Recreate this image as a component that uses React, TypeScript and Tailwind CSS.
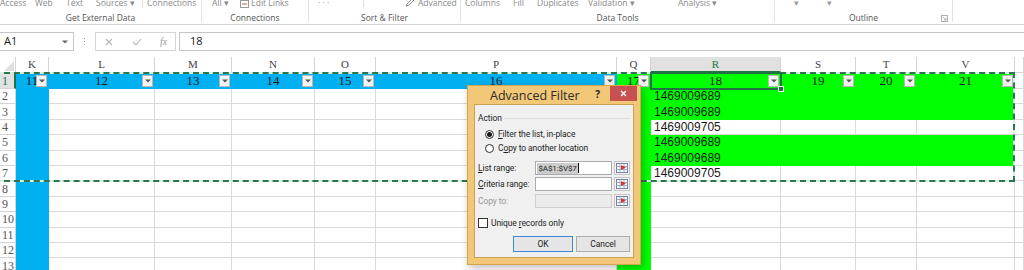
import React from "react";

type Fill = "blue" | "green" | "none";

const columns = ["K", "L", "M", "N", "O", "P", "Q", "R", "S", "T", "V", "W"];
const headerValues = ["11", "12", "13", "14", "15", "16", "17", "18", "19", "20", "21", ""];
const rData: Record<number, string> = {
  2: "1469009689",
  3: "1469009689",
  4: "1469009705",
  5: "1469009689",
  6: "1469009689",
  7: "1469009705",
};

// which colour a cell gets, row numbers are the sheet's (1..13)
function fillFor(row: number, col: number): Fill {
  if (col === 11) return "none";
  if (row === 1) return col <= 5 ? "blue" : "green";
  if (col === 0) return "blue";
  if (col === 6) return "green";
  if (col >= 7 && [2, 3, 5, 6].includes(row)) return "green";
  return "none";
}

const fillClass: Record<Fill, string> = {
  blue: "bg-[#00b0f0] border-[#00b0f0]",
  green: "bg-[#00ff00] border-[#00ff00]",
  none: "bg-white border-[#dadada]",
};

const FilterButton = () => (
  <div className="absolute right-[1px] top-[2px] flex h-[12px] w-[11px] items-center justify-center border border-[#b8b8b8] bg-[#f4f4f4]">
    <svg width="6" height="4" viewBox="0 0 6 4">
      <path d="M0 0.5h6L3 3.5z" fill="#555" />
    </svg>
  </div>
);

const RangeButton = () => (
  <div className="ml-[2px] flex h-[14px] w-[16px] items-center justify-center border border-[#c4c4c4] bg-[#f6f6f6]">
    <svg width="12" height="10" viewBox="0 0 12 10">
      <rect x="0.5" y="0.5" width="11" height="9" fill="#fff" stroke="#6b7fa8" />
      <path d="M0.5 3.5h11M0.5 6.5h11M4 0.5v9M8 0.5v9" stroke="#9aaccc" strokeWidth="1" />
      <path d="M5 2l5 2.5-5 2.5z" fill="#d8322a" />
    </svg>
  </div>
);

const Ribbon = () => (
  <div className="flex h-[25px] overflow-hidden border-b border-[#d5d5d5] bg-white font-['Open_Sans',sans-serif] text-[8.5px] leading-[12px]">
    {/* Get External Data */}
    <div className="flex h-[22px] w-[202px] flex-col border-r border-[#e2e2e2]">
      <div className="-mt-[3px] flex h-[12px] text-[#8a8a8a]">
        <span className="w-[35px]">Access</span>
        <span className="w-[31px]">Web</span>
        <span className="w-[30px]">Text</span>
        <span className="w-[46px]">Sources ▾</span>
        <span className="mr-[4px] h-[10px] border-l border-[#dcdcdc]" />
        <span>Connections</span>
      </div>
      <div className="mt-[3px] text-center text-[#555]">Get External Data</div>
    </div>
    {/* Connections */}
    <div className="flex h-[22px] w-[107px] flex-col border-r border-[#e2e2e2]">
      <div className="-mt-[3px] flex h-[12px] pl-[10px] text-[#8a8a8a]">
        <span className="w-[28px]">All ▾</span>
        <svg className="mr-[2px] mt-[3px]" width="9" height="8" viewBox="0 0 9 8">
          <rect x="0.5" y="0.5" width="8" height="7" fill="none" stroke="#9a9a9a" />
          <path d="M2 4h5" stroke="#c55" />
        </svg>
        <span>Edit Links</span>
      </div>
      <div className="mt-[3px] text-center text-[#555]">Connections</div>
    </div>
    {/* Sort & Filter */}
    <div className="flex h-[22px] w-[152px] flex-col border-r border-[#e2e2e2]">
      <div className="-mt-[3px] flex h-[12px] pl-[9px] text-[#8a8a8a]">
        <span className="w-[45px]">· · ·</span>
        <span className="h-[10px] border-l border-[#dcdcdc]" />
        <svg className="ml-[41px] mr-[3px] mt-[2px]" width="10" height="8" viewBox="0 0 10 8">
          <path d="M1 7l3-1 5-5-2-1-5 5z" fill="none" stroke="#8a8a8a" />
        </svg>
        <span>Advanced</span>
      </div>
      <div className="mt-[3px] text-center text-[#555]">Sort &amp; Filter</div>
    </div>
    {/* Data Tools */}
    <div className="flex h-[22px] w-[314px] flex-col border-r border-[#e2e2e2]">
      <div className="-mt-[3px] flex h-[12px] pl-[4px] text-[#8a8a8a]">
        <span className="w-[48px]">Columns</span>
        <span className="w-[24px]">Fill</span>
        <span className="w-[51px]">Duplicates</span>
        <span className="w-[90px]">Validation ▾</span>
        <span>Analysis ▾</span>
      </div>
      <div className="mt-[3px] text-center text-[#555]">Data Tools</div>
    </div>
    {/* Outline */}
    <div className="flex h-[22px] w-[178px] flex-col border-r border-[#e2e2e2]">
      <div className="-mt-[3px] flex h-[12px] pl-[19px] text-[#9a9a9a]">
        <span className="w-[33px]">▾</span>
        <span>▾</span>
      </div>
      <div className="relative mt-[3px] text-center text-[#555]">
        Outline
        <svg className="absolute right-[4px] top-[3px]" width="7" height="7" viewBox="0 0 7 7">
          <rect x="0.5" y="0.5" width="6" height="6" fill="none" stroke="#b0b0b0" />
          <path d="M2 2l3 3M5 3v2H3" fill="none" stroke="#b0b0b0" />
        </svg>
      </div>
    </div>
    <div className="flex-1" />
  </div>
);

const FormulaBar = () => (
  <div className="mt-[7px] flex h-[19px] font-['Open_Sans',sans-serif] text-[11px]">
    <div className="flex w-[74px] items-center justify-between border border-l-0 border-[#c6c6c6] bg-white pl-[4px] pr-[5px] text-[#222]">
      <span>A1</span>
      <svg width="6" height="4" viewBox="0 0 6 4">
        <path d="M0 0.5h6L3 3.5z" fill="#666" />
      </svg>
    </div>
    <div className="flex w-[21px] flex-col items-center justify-center gap-[2px]">
      <span className="h-[1px] w-[1px] bg-[#9a9a9a]" />
      <span className="h-[1px] w-[1px] bg-[#9a9a9a]" />
      <span className="h-[1px] w-[1px] bg-[#9a9a9a]" />
    </div>
    <div className="flex w-[81px] items-center border border-[#d4d4d4] bg-white">
      <svg className="ml-[9px]" width="8" height="8" viewBox="0 0 8 8">
        <path d="M1 1l6 6M7 1L1 7" stroke="#b4b4b4" strokeWidth="1.1" />
      </svg>
      <svg className="ml-[19px]" width="10" height="8" viewBox="0 0 10 8">
        <path d="M1 4l3 3 5-6" fill="none" stroke="#b4b4b4" strokeWidth="1.1" />
      </svg>
      <span className="ml-[18px] font-['Liberation_Serif',serif] text-[10px] italic text-[#9a9a9a]">fx</span>
    </div>
    <div className="ml-[3px] flex flex-1 items-center border border-r-0 border-[#c6c6c6] bg-white pl-[10px] text-[#222]">
      18
    </div>
  </div>
);

const Sheet = () => {
  const rows = Array.from({ length: 13 }, (_, i) => i + 1);
  return (
    <div className="relative mt-[6px]">
      <div className="grid grid-cols-[16px_33px_106px_77px_83px_61px_241px_34px_130px_75px_61px_98px_9px] grid-rows-[16px_16px_repeat(12,15.4px)]">
        {/* corner */}
        <div className="relative border-b border-r border-[#d4d4d4] bg-white">
          <svg className="absolute bottom-[1px] right-[1px]" width="10" height="10" viewBox="0 0 10 10">
            <path d="M10 0v10H0z" fill="#dfdfdf" />
          </svg>
        </div>
        {columns.map((c) => (
          <div
            key={c}
            className={
              c === "R"
                ? "flex items-center justify-center border-b-2 border-r border-b-[#217346] border-r-[#d4d4d4] bg-[#e1e1e1] font-['Liberation_Serif',serif] text-[11px] text-[#217346]"
                : "flex items-center justify-center border-b border-r border-[#d4d4d4] bg-white font-['Liberation_Serif',serif] text-[11px] text-[#444]"
            }
          >
            {c === "W" ? "" : c}
          </div>
        ))}
        {rows.map((r) => (
          <React.Fragment key={r}>
            <div
              className={
                r === 1
                  ? "flex items-center border-b border-r-2 border-b-[#d4d4d4] border-r-[#217346] bg-[#e1e1e1] pl-[2px] font-['Liberation_Serif',serif] text-[12px] text-[#217346]"
                  : "flex items-center border-b border-r border-[#d4d4d4] bg-white pl-[2px] font-['Liberation_Serif',serif] text-[12px] text-[#555]"
              }
            >
              {r}
            </div>
            {columns.map((c, ci) => {
              const f = fillFor(r, ci);
              if (r === 1) {
                return (
                  <div
                    key={c}
                    className={`relative flex items-center justify-center overflow-hidden border-b border-r font-['Liberation_Serif',serif] text-[13px] text-[#1a1a1a] ${fillClass[f]}`}
                  >
                    {headerValues[ci]}
                    {ci < 11 && <FilterButton />}
                  </div>
                );
              }
              return (
                <div
                  key={c}
                  className={`flex items-center overflow-hidden border-b border-r pl-[3px] font-['Liberation_Sans',sans-serif] text-[12px] text-[#1a1a1a] ${fillClass[f]}`}
                >
                  {c === "R" ? rData[r] ?? "" : ""}
                </div>
              );
            })}
          </React.Fragment>
        ))}
      </div>

      {/* marching ants around A1:V7 */}
      <div className="pointer-events-none absolute left-[-6px] top-[15px] h-[110px] w-[1021px] border-2 border-[#d8efe2]">
        <div className="absolute inset-[-2px] border-2 border-dashed border-[#2b7550]" />
      </div>

      {/* active cell R1 */}
      <div className="pointer-events-none absolute left-[650px] top-[15px] h-[18px] w-[132px] border-2 border-[#217346]">
        <div className="absolute bottom-[-4px] right-[-4px] h-[6px] w-[6px] border border-white bg-[#217346]" />
      </div>
    </div>
  );
};

const Radio = ({ on }: { on?: boolean }) => (
  <div className="flex h-[9px] w-[9px] shrink-0 items-center justify-center rounded-full border border-[#333] bg-white">
    {on && <div className="h-[5px] w-[5px] rounded-full bg-[#1a1a1a]" />}
  </div>
);

const AdvancedFilter = () => (
  <div className="absolute left-[467px] top-[85px] h-[180px] w-[174px] border border-[#d8a64a] bg-[#f2c878] font-['Open_Sans',sans-serif] shadow-[2px_3px_8px_rgba(0,0,0,0.25)]">
    <div className="flex h-[18px] items-start">
      <span className="ml-[22px] mt-[2px] text-[12.5px] leading-[15px] text-[#2b2b2b]">Advanced Filter</span>
      <span className="ml-auto mr-[10px] mt-[2px] text-[10px] font-bold leading-[13px] text-[#222]">?</span>
      <div className="mr-[3px] flex h-[15px] w-[27px] items-center justify-center bg-[#c75050]">
        <svg width="7" height="7" viewBox="0 0 7 7">
          <path d="M1 1l5 5M6 1L1 6" stroke="#fff" strokeWidth="1.3" />
        </svg>
      </div>
    </div>
    <div className="ml-[6px] h-[154px] w-[160px] whitespace-nowrap border border-[#caa253] bg-[#f0f0f0] px-[3px] font-['Roboto',sans-serif] text-[8.5px] leading-[12px] tracking-[-0.1px] text-[#1e1e1e]">
      <div className="mt-[7px] flex items-center">
        <span>Action</span>
        <div className="ml-[2px] h-[1px] flex-1 bg-[#dcdcdc]" />
      </div>
      <div className="ml-[7px] mt-[4px] flex h-[12px] items-center gap-[4px]">
        <Radio on />
        <span>
          <u>F</u>ilter the list, in-place
        </span>
      </div>
      <div className="ml-[7px] mt-[2px] flex h-[12px] items-center gap-[4px]">
        <Radio />
        <span>
          C<u>o</u>py to another location
        </span>
      </div>
      <div className="mt-[7px] flex h-[14px] items-center">
        <span className="w-[59px]">
          <u>L</u>ist range:
        </span>
        <div className="flex h-[14px] w-[79px] items-center border border-[#abadb3] bg-white pl-[1px]">
          <span className="bg-[#cccccc] px-[1px] text-[8px] leading-[11px] text-[#222]">$A$1:$V$7</span>
          <span className="h-[10px] w-[1px] bg-[#111]" />
        </div>
        <RangeButton />
      </div>
      <div className="mt-[2px] flex h-[14px] items-center">
        <span className="w-[59px]">
          <u>C</u>riteria range:
        </span>
        <div className="h-[14px] w-[79px] border border-[#abadb3] bg-white" />
        <RangeButton />
      </div>
      <div className="mt-[3px] flex h-[14px] items-center">
        <span className="w-[59px] text-[#9a9a9a]">Copy to:</span>
        <div className="h-[14px] w-[79px] border border-[#cfcfcf] bg-[#ececec]" />
        <RangeButton />
      </div>
      <div className="mt-[9px] flex h-[11px] items-center gap-[3px]">
        <div className="h-[10px] w-[10px] border border-[#333] bg-white" />
        <span>
          Unique <u>r</u>ecords only
        </span>
      </div>
      <div className="mt-[8px] flex justify-end gap-[3px]">
        <div className="flex h-[16px] w-[60px] items-center justify-center border border-[#3c8ad8] bg-[#e5e5e5]">OK</div>
        <div className="flex h-[16px] w-[54px] items-center justify-center border border-[#adadad] bg-[#e5e5e5]">Cancel</div>
      </div>
    </div>
  </div>
);

export default function App() {
  return (
    <div className="relative h-[270px] w-[1024px] overflow-hidden bg-white">
      <Ribbon />
      <FormulaBar />
      <Sheet />
      <AdvancedFilter />
    </div>
  );
}
